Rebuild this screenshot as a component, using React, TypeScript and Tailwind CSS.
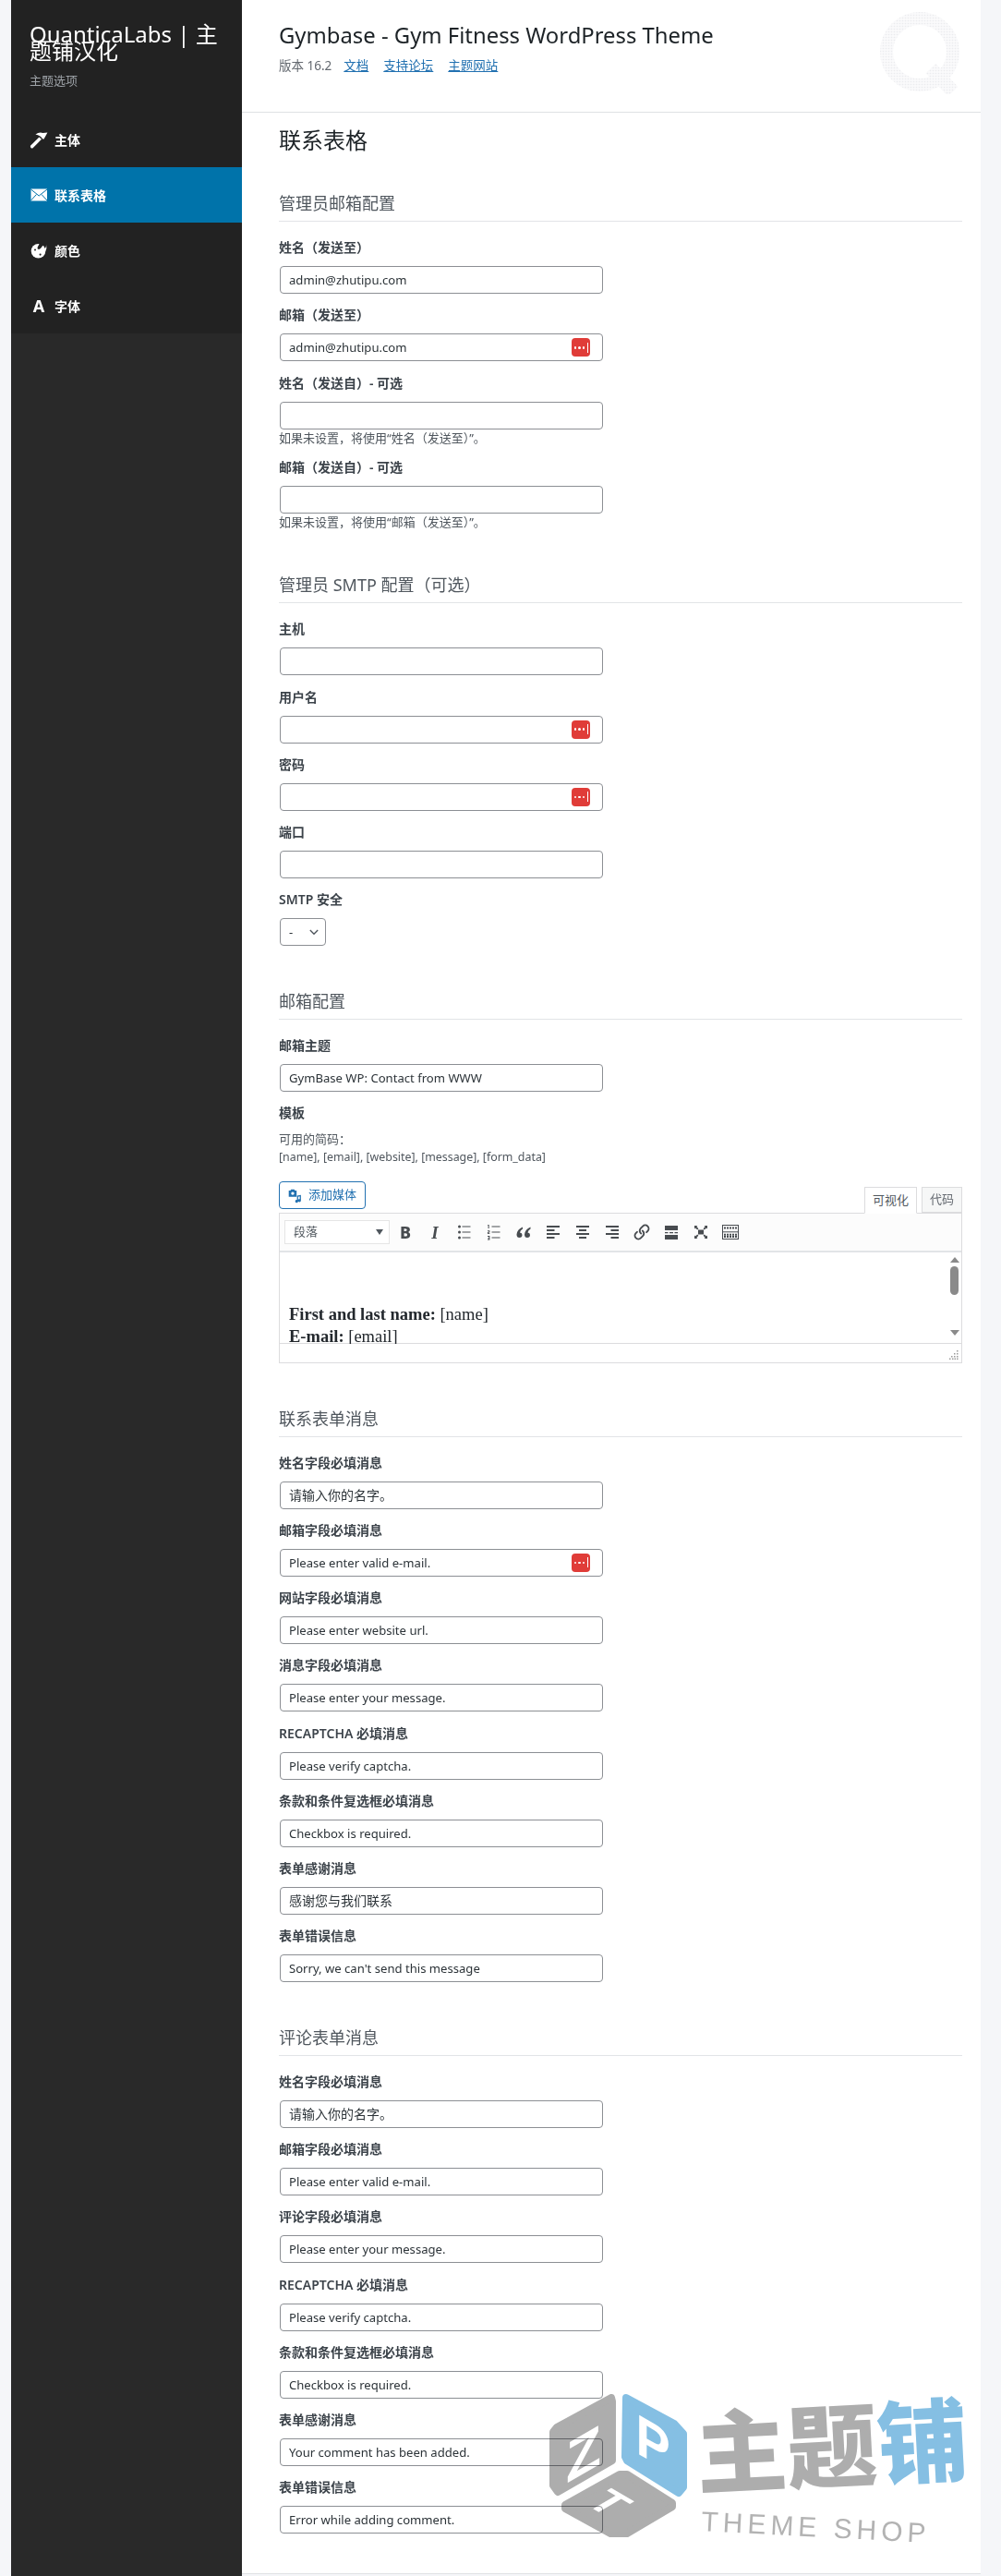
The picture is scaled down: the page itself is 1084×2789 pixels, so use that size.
import { Link as LinkIcon } from 'lucide-react';

type Field = {
  label: string;
  value?: string;
  help?: string;
  dots?: boolean;
};

const adminFields: Field[] = [
  { label: '姓名（发送至）', value: 'admin@zhutipu.com' },
  { label: '邮箱（发送至）', value: 'admin@zhutipu.com', dots: true },
  { label: '姓名（发送自）- 可选', help: '如果未设置，将使用“姓名（发送至）”。' },
  { label: '邮箱（发送自）- 可选', help: '如果未设置，将使用“邮箱（发送至）”。' },
];

const smtpFields: Field[] = [
  { label: '主机' },
  { label: '用户名', dots: true },
  { label: '密码', dots: true },
  { label: '端口' },
];

const contactFields: Field[] = [
  { label: '姓名字段必填消息', value: '请输入你的名字。' },
  { label: '邮箱字段必填消息', value: 'Please enter valid e-mail.', dots: true },
  { label: '网站字段必填消息', value: 'Please enter website url.' },
  { label: '消息字段必填消息', value: 'Please enter your message.' },
  { label: 'RECAPTCHA 必填消息', value: 'Please verify captcha.' },
  { label: '条款和条件复选框必填消息', value: 'Checkbox is required.' },
  { label: '表单感谢消息', value: '感谢您与我们联系' },
  { label: '表单错误信息', value: "Sorry, we can't send this message" },
];

const commentFields: Field[] = [
  { label: '姓名字段必填消息', value: '请输入你的名字。' },
  { label: '邮箱字段必填消息', value: 'Please enter valid e-mail.' },
  { label: '评论字段必填消息', value: 'Please enter your message.' },
  { label: 'RECAPTCHA 必填消息', value: 'Please verify captcha.' },
  { label: '条款和条件复选框必填消息', value: 'Checkbox is required.' },
  { label: '表单感谢消息', value: 'Your comment has been added.' },
  { label: '表单错误信息', value: 'Error while adding comment.' },
];

function HammerIcon() {
  return (
    <svg viewBox="0 0 20 20" className="w-5 h-5" fill="white">
      <path d="M1 16.8 L10.4 7.4 L13 9.8 L3.6 19.2 Q2.5 19.9 1.4 18.9 Q0.6 17.9 1 16.8Z" />
      <path d="M6.4 4.4 Q10.6 1.6 14.4 3 L19.4 2.4 L15.6 9.4 L14.2 9.6 Q12 5.4 6.4 4.4Z" />
    </svg>
  );
}

function MailIcon() {
  return (
    <svg viewBox="0 0 20 20" className="w-5 h-5">
      <rect x="1.5" y="3.5" width="17.5" height="13" fill="white" />
      <path d="M1.5 4 L10.2 11 L19 4 M1.5 16 L7.5 9.5 M19 16 L13 9.5" fill="none" stroke="#0073aa" strokeWidth="1" />
    </svg>
  );
}

function ArtIcon() {
  return (
    <svg viewBox="0 0 20 20" className="w-5 h-5">
      <circle cx="9.5" cy="10.8" r="7.8" fill="white" />
      <path d="M10.6 1.6 C10.8 4 9 5.6 8.6 7 C8.2 8.6 9.8 9.6 11.2 8.6 C13 7.2 13.6 4.4 18 2.4 L18 1 L10.6 1Z" fill="#222222" />
      <path d="M18 2.6 C18.6 6 16.8 9 15 10 L16.4 13 L18.4 8 Z" fill="white" />
      <circle cx="6" cy="9.6" r="1" fill="#222222" />
      <circle cx="11.6" cy="14.6" r="1.1" fill="#222222" />
    </svg>
  );
}

function DotsBadge() {
  return (
    <div className="absolute right-[13px] top-[4px] w-5 h-5 rounded-[4px] bg-[#e03c38] flex items-center justify-center gap-[2px] pl-[1px]">
      <span className="w-[2.5px] h-[2.5px] rounded-full bg-white" />
      <span className="w-[2.5px] h-[2.5px] rounded-full bg-white" />
      <span className="w-[2.5px] h-[2.5px] rounded-full bg-white" />
      <span className="w-[1px] h-[11px] bg-white ml-[1px]" />
    </div>
  );
}

function FieldLabel({ children }: { children: string }) {
  return <div className="h-[22px] leading-[22px] mb-[9px] text-[14px] font-semibold text-[#3c434a]">{children}</div>;
}

function TextField({ field }: { field: Field }) {
  // chinese values sit a bit larger than the latin ones in the original
  const isChinese = /[^\x00-\x7f]/.test(field.value ?? '');
  return (
    <div>
      <FieldLabel>{field.label}</FieldLabel>
      <div
        className={`relative ml-px w-[350px] h-[30px] rounded border border-[#8c8f94] bg-white pl-[9px] leading-[28px] text-[#2c3338] ${
          isChinese ? 'text-[14px]' : 'text-[13.1px]'
        }`}
      >
        {field.value}
        {field.dots && <DotsBadge />}
      </div>
      {field.help && <div className="h-[18px] leading-[18px] text-[13px] text-[#50575e]">{field.help}</div>}
    </div>
  );
}

function FieldList({ fields }: { fields: Field[] }) {
  return (
    <div className="flex flex-col gap-[12.25px]">
      {fields.map((field) => (
        <TextField key={field.label} field={field} />
      ))}
    </div>
  );
}

function SectionTitle({ children }: { children: string }) {
  return (
    <h3 className="h-[35px] leading-[30px] border-b border-[#e2e4e7] text-[18px] font-normal text-[#50575e] mb-[17px]">
      {children}
    </h3>
  );
}

function ToolbarIcon({ children }: { children: React.ReactNode }) {
  return <div className="w-8 h-5 flex items-center justify-center text-[#484c50]">{children}</div>;
}

function EditorToolbar() {
  return (
    <div className="h-[42px] border-b-2 border-[#e2e4e7] bg-[#fcfcfc] flex items-center pl-[5px]">
      <div className="w-[114px] h-[26px] border border-[#e5e5e5] bg-white flex items-center justify-between pl-[9px] pr-[6px] text-[13px] text-[#50575e] mr-[1px]">
        <span>段落</span>
        <span className="w-0 h-0 border-x-[4px] border-x-transparent border-t-[6px] border-t-[#50575e]" />
      </div>
      <ToolbarIcon>
        <span className="text-[18px] font-extrabold leading-none">B</span>
      </ToolbarIcon>
      <ToolbarIcon>
        <span className="font-['Liberation_Serif',serif] italic text-[19px] font-bold leading-none">I</span>
      </ToolbarIcon>
      <ToolbarIcon>
        <svg viewBox="0 0 20 20" className="w-5 h-5" fill="currentColor">
          <circle cx="4.5" cy="4" r="1.5" />
          <circle cx="4.5" cy="10" r="1.5" />
          <circle cx="4.5" cy="16" r="1.5" />
          <path d="M7.5 3.5h9v1h-9zM7.5 9.5h9v1h-9zM7.5 15.5h9v1h-9z" />
        </svg>
      </ToolbarIcon>
      <ToolbarIcon>
        <svg viewBox="0 0 20 20" className="w-5 h-5" fill="currentColor">
          <path d="M3.4 2h1.2v4h-1v-3h-.6zM3 8.2h2.4v2.4h-1.4v.6h1.4v.8h-2.4v-2.2h1.4v-.8h-1.4zM3 14h2.4v4.4h-2.4v-.8h1.4v-.9h-1v-.7h1v-.9h-1.4z" />
          <path d="M7.5 3.5h9v1h-9zM7.5 9.5h9v1h-9zM7.5 15.5h9v1h-9z" />
        </svg>
      </ToolbarIcon>
      <ToolbarIcon>
        <svg viewBox="0 0 20 20" className="w-5 h-5" fill="currentColor">
          <path d="M9 4.5 Q3 7 2.5 12.5 Q2.5 16 5.5 16 Q8.5 16 8.5 13 Q8.5 10.6 6 10.4 Q6.4 7.8 9 6.4Z" />
          <path d="M17.5 4.5 Q11.5 7 11 12.5 Q11 16 14 16 Q17 16 17 13 Q17 10.6 14.5 10.4 Q14.9 7.8 17.5 6.4Z" />
        </svg>
      </ToolbarIcon>
      <ToolbarIcon>
        <svg viewBox="0 0 20 20" className="w-5 h-5" fill="currentColor">
          <path d="M3 3h14v2H3zM3 7h8.5v2H3zM3 11h14v2H3zM3 15h8.5v2H3z" />
        </svg>
      </ToolbarIcon>
      <ToolbarIcon>
        <svg viewBox="0 0 20 20" className="w-5 h-5" fill="currentColor">
          <path d="M3 3h14v2H3zM6 7h8v2H6zM3 11h14v2H3zM6 15h8v2H6z" />
        </svg>
      </ToolbarIcon>
      <ToolbarIcon>
        <svg viewBox="0 0 20 20" className="w-5 h-5" fill="currentColor">
          <path d="M3 3h14v2H3zM8.5 7H17v2H8.5zM3 11h14v2H3zM8.5 15H17v2H8.5z" />
        </svg>
      </ToolbarIcon>
      <ToolbarIcon>
        <LinkIcon className="w-[18px] h-[18px] -scale-y-100 rotate-90" strokeWidth={2.6} />
      </ToolbarIcon>
      <ToolbarIcon>
        <svg viewBox="0 0 20 20" className="w-5 h-5" fill="currentColor">
          <path d="M3 3h14v5H3zM3 13h14v5H3zM3 10h3.5v1.2H3zM8 10h4v1.2H8zM13.5 10H17v1.2h-3.5z" />
        </svg>
      </ToolbarIcon>
      <ToolbarIcon>
        <svg viewBox="0 0 20 20" className="w-5 h-5" fill="currentColor">
          <path d="M7 7.5h6v5H7z" />
          <path d="M3 3h3.4L5.4 4 7.4 6.2 6.2 7.4 4 5.4 3 6.4zM17 3v3.4L16 5.4 13.8 7.4 12.6 6.2 14.6 4 13.6 3zM3 17v-3.4l1 1 2.2-2 1.2 1.2-2 2.2 1 1zM17 17h-3.4l1-1-2-2.2 1.2-1.2 2.2 2 1-1z" />
        </svg>
      </ToolbarIcon>
      <ToolbarIcon>
        <svg viewBox="0 0 20 20" className="w-5 h-5" fill="none" stroke="currentColor">
          <rect x="1.5" y="2.5" width="17" height="15" />
          <path d="M1.5 9.8h17" />
          <path d="M3 5.5h14M3 12.8h14M3 15h14" strokeWidth="2" strokeDasharray="2 1" />
        </svg>
      </ToolbarIcon>
    </div>
  );
}

function Editor() {
  return (
    <div className="w-[740px]">
      <div className="flex items-start justify-between h-[34px]">
        <button className="w-[94px] h-[30px] rounded border border-[#2271b1] bg-white flex items-center pl-[8px] gap-[6px] text-[13px] text-[#2271b1]">
          <svg viewBox="0 0 20 20" className="w-[17px] h-[17px]" fill="currentColor">
            <path d="M2 3.5h2l1-1.5h4l1 1.5h2v8H2z" />
            <circle cx="7" cy="7.2" r="2" fill="white" />
            <path d="M12.5 10 L17.5 9 V16.2 A1.9 1.9 0 1 1 16 14.4 V11 L14 11.5 V17.2 A1.9 1.9 0 1 1 12.5 15.4Z" />
          </svg>
          <span>添加媒体</span>
        </button>
        <div className="flex items-start mt-[6px] text-[13px] text-[#50575e]">
          <div className="relative z-10 w-[57px] h-[29px] border border-[#dcdcde] border-b-white bg-white flex items-center justify-center">可视化</div>
          <div className="ml-[5px] w-[44px] h-[28px] border border-[#dcdcde] bg-[#f6f7f7] flex items-center justify-center text-[#646970]">代码</div>
        </div>
      </div>
      <div className="border border-[#dcdcde]">
        <EditorToolbar />
        <div className="relative h-[99px] border-b border-[#dcdcde] pt-[55px] pl-[10px] font-['Liberation_Serif',serif] text-[18.5px] leading-[24px] text-[#23282d]">
          <p>
            <strong>First and last name:</strong> [name]
          </p>
          <p>
            <strong>E-mail:</strong> [email]
          </p>
          <div className="absolute right-[3px] top-[5px] w-[9px] flex flex-col items-center">
            <span className="w-0 h-0 border-x-[5px] border-x-transparent border-b-[6px] border-b-[#8a8a8a]" />
            <span className="w-[9px] h-[31px] rounded-full bg-[#8a8a8a] mt-[4px]" />
            <span className="w-0 h-0 border-x-[5px] border-x-transparent border-t-[6px] border-t-[#8a8a8a] mt-[38px]" />
          </div>
        </div>
        <div className="relative h-5 bg-white">
          <svg viewBox="0 0 10 10" className="absolute right-[3px] bottom-[3px] w-[10px] h-[10px]" fill="#9a9a9a">
            <path d="M8 0h1.5v1.5H8zM5 3h1.5v1.5H5zM8 3h1.5v1.5H8zM2 6h1.5v1.5H2zM5 6h1.5v1.5H5zM8 6h1.5v1.5H8zM0 8.5h1.5V10H0zM3 8.5h1.5V10H3zM5.5 8.5H7V10H5.5zM8 8.5h1.5V10H8z" />
          </svg>
        </div>
      </div>
    </div>
  );
}

function Watermark() {
  return (
    <svg
      viewBox="0 -30 480 200"
      className="absolute left-[593px] top-[2560px] w-[480px] h-[200px] mix-blend-multiply pointer-events-none"
    >
      <g strokeLinejoin="round" strokeWidth="8">
        <path d="M69 6 L10 38 L6 43 V101 L11 108 L70 74 V10Z" fill="#adadad" stroke="#adadad" />
        <path d="M85 6 L137 34 L147 45 V103 L142 109 L86 74 L84 70Z" fill="#85bfe3" stroke="#85bfe3" />
        <path d="M78 89 L19 122 V126 L68 153 H86 L135 124 V120 L86 89Z" fill="#adadad" stroke="#adadad" />
      </g>
      <g fill="white" fontFamily="'Liberation Sans', sans-serif" fontWeight="700" fontSize="62" textAnchor="middle">
        <text transform="translate(39 88) skewY(-30)">Z</text>
        <text transform="translate(114 76) skewY(30) scale(0.9 1)">P</text>
        <text transform="translate(66 120) matrix(0.85 0.5 -0.85 0.5 0 0) scale(0.8)" dy="20">T</text>
      </g>
      <text
        transform="translate(163 103) rotate(-3)"
        fontFamily="'Noto Sans CJK SC', sans-serif"
        fontWeight="900"
        fontSize="98"
        fill="#adadad"
      >
        主题<tspan fill="#85bfe3">铺</tspan>
      </text>
      <text
        transform="translate(166 150) rotate(3)"
        fontFamily="'Liberation Sans', sans-serif"
        fontSize="30"
        letterSpacing="5"
        fill="#b3b3b3"
      >
        THEME SHOP
      </text>
    </svg>
  );
}

export default function App() {
  const navItems = [
    { title: '主体', icon: <HammerIcon /> },
    { title: '联系表格', icon: <MailIcon />, active: true },
    { title: '颜色', icon: <ArtIcon /> },
    { title: '字体', icon: <span className="w-5 text-center text-[18px] font-bold text-white">A</span> },
  ];

  return (
    <div className="relative w-[1084px] h-[2789px] overflow-hidden flex pl-3 bg-[#f5f6f9] font-['Noto_Sans','Noto_Sans_CJK_SC',sans-serif]">
      <aside className="w-[250px] flex flex-col bg-[#292929]">
        <div className="bg-[#222222]">
          <div className="h-[121px] pl-5 pr-[24px] pt-[28px]">
            <div className="text-[24px] leading-[18px] text-white">QuanticaLabs | 主题铺汉化</div>
            <div className="mt-[13px] text-[13px] leading-[20px] text-[#9ea3a8]">主题选项</div>
          </div>
          <nav>
            {navItems.map((item) => (
              <div
                key={item.title}
                className={`h-[60px] flex items-center pl-5 gap-[7px] text-[14px] font-semibold text-white ${
                  item.active ? 'bg-[#0073aa]' : ''
                }`}
              >
                {item.icon}
                <span>{item.title}</span>
              </div>
            ))}
          </nav>
        </div>
      </aside>

      <main className="w-[800px] h-[2786px] bg-white border-b border-[#dfe1e4] box-content">
        <header className="relative h-[122px] border-b border-[#dfe1e4] pl-10 pt-[22px]">
          <h1 className="text-[23.85px] leading-[33px] font-normal text-[#1d2327]">Gymbase - Gym Fitness WordPress Theme</h1>
          <div className="mt-[5px] flex items-center gap-[16px] text-[13.5px] leading-[22px] text-[#646970]">
            <span className="-mr-[3px]">版本 16.2</span>
            <a className="underline text-[#2271b1]">文档</a>
            <a className="underline text-[#2271b1]">支持论坛</a>
            <a className="underline text-[#2271b1]">主题网站</a>
          </div>
          <svg viewBox="0 0 90 90" className="absolute right-[20px] top-[12px] w-[90px] h-[90px]">
            <defs>
              <pattern id="stipple" width="3" height="3" patternUnits="userSpaceOnUse">
                <rect width="3" height="3" fill="#fafafb" />
                <circle cx="1.5" cy="1.5" r="0.8" fill="#ebecee" />
              </pattern>
            </defs>
            <circle cx="44" cy="44" r="36" fill="none" stroke="url(#stipple)" strokeWidth="14" />
            <path d="M56 62 L80 87" fill="none" stroke="url(#stipple)" strokeWidth="15" />
          </svg>
        </header>

        <div className="pl-10 pr-5">
          <h2 className="mt-[15px] h-[30px] leading-[30px] text-[24px] font-normal text-[#1d2327]">联系表格</h2>

          <section className="mt-[38px]">
            <SectionTitle>管理员邮箱配置</SectionTitle>
            <FieldList fields={adminFields} />
          </section>

          <section className="mt-[44.5px]">
            <SectionTitle>管理员 SMTP 配置（可选）</SectionTitle>
            <FieldList fields={smtpFields} />
            <div className="mt-[12.25px]">
              <FieldLabel>SMTP 安全</FieldLabel>
              <div className="ml-px w-[50px] h-[30px] rounded border border-[#8c8f94] bg-white flex items-center justify-between pl-[9px] pr-[7px] text-[13px] text-[#2c3338]">
                <span>-</span>
                <svg viewBox="0 0 12 8" className="w-[10px] h-[7px]" fill="none" stroke="#50575e" strokeWidth="1.6">
                  <path d="M1 1 L6 6.2 L11 1" />
                </svg>
              </div>
            </div>
          </section>

          <section className="mt-[44.5px]">
            <SectionTitle>邮箱配置</SectionTitle>
            <TextField field={{ label: '邮箱主题', value: 'GymBase WP: Contact from WWW' }} />
            <div className="mt-[12.25px] h-[22px] leading-[22px] text-[14px] font-semibold text-[#3c434a]">模板</div>
            <div className="mt-[7px] leading-[20px] text-[#50575e]">
              <div className="text-[13px]">可用的简码：</div>
              <div className="text-[12.4px]">[name], [email], [website], [message], [form_data]</div>
            </div>
            <div className="mt-[16px]">
              <Editor />
            </div>
          </section>

          <section className="mt-[44.5px]">
            <SectionTitle>联系表单消息</SectionTitle>
            <FieldList fields={contactFields} />
          </section>

          <section className="mt-[44.5px]">
            <SectionTitle>评论表单消息</SectionTitle>
            <FieldList fields={commentFields} />
          </section>
        </div>
      </main>

      <Watermark />
    </div>
  );
}
